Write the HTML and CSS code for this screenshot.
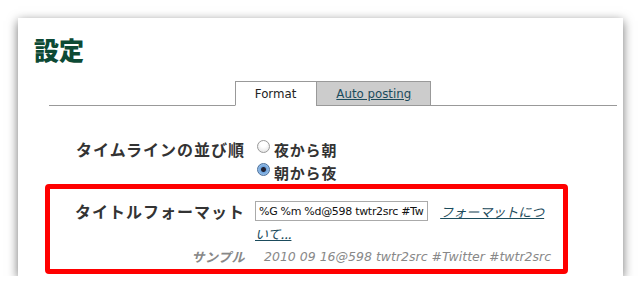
FILE: index.html
```html
<!DOCTYPE html>
<html lang="ja">
<head>
    <meta charset="UTF-8">
    <title>設定</title>
    <link rel="stylesheet" href="styles.css">
</head>
<body>
    <div class="card">
        <h1>設定</h1>

        <div class="tabs">
            <span class="tab active">Format</span>
            <span class="tab"><a href="#">Auto posting</a></span>
        </div>

        <div class="form">
            <div class="row plain">
                <div class="label">タイムラインの並び順</div>
                <div class="control radios">
                    <label><input type="radio" name="order"> 夜から朝</label>
                    <label><input type="radio" name="order" checked> 朝から夜</label>
                </div>
            </div>

            <div class="box">
                <div class="row">
                    <div class="label">タイトルフォーマット</div>
                    <div class="control format">
                        <input type="text" value="%G %m %d@598 twtr2src #Twitter">
                        <a href="#" class="help">フォーマットについて...</a>
                    </div>
                </div>
                <div class="row sample">
                    <div class="label">サンプル</div>
                    <div class="control">2010 09 16@598 twtr2src #Twitter #twtr2src</div>
                </div>
            </div>
        </div>
    </div>
</body>
</html>
```

FILE: styles.css
```css
body {
    margin: 0;
    padding: 18px 0 0 18px;
    background-color: #fff;
    font-family: "DejaVu Sans", "Noto Sans CJK JP", sans-serif;
    color: #333;
}

.card {
    width: 605px;
    height: 258px;
    background-color: #fff;
    box-shadow: 0 3px 10px rgba(0, 0, 0, 0.55);
    box-sizing: border-box;
    padding-top: 14px;
}

h1 {
    margin: 0 0 0 16px;
    font-family: "Noto Sans CJK JP", sans-serif;
    font-size: 25px;
    line-height: 34px;
    font-weight: 900;
    color: #0d4a35;
}

/* tab bar */
.tabs {
    display: flex;
    justify-content: center;
    margin: 15px 6px 0 31px;
    border-bottom: 1px solid #999;
}

.tab {
    display: block;
    height: 23px;
    line-height: 24px;
    padding: 0 19px;
    margin-bottom: -1px;
    border: 1px solid #999;
    background-color: #ccc;
    font-size: 11.8px;
    color: #222;
}

.tab.active {
    background-color: #fff;
    border-right: none;
    border-bottom: 1px solid #fff;
    padding-right: 20px;
}

.tab a {
    color: #1b4b5c;
}

/* form rows */
.form {
    margin: 32px 0 0 27px;
    width: 523px;
}

.row {
    display: flex;
}

.row.plain {
    padding-left: 5px;
}

.label {
    width: 195px;
    flex-shrink: 0;
    text-align: right;
    font-family: "Noto Sans CJK JP", sans-serif;
    font-weight: bold;
    font-size: 16px;
    letter-spacing: 1px;
    line-height: 23px;
    color: #333;
}

.control {
    margin-left: 10px;
}

.radios label {
    display: flex;
    align-items: center;
    height: 23px;
    font-family: "Noto Sans CJK JP", sans-serif;
    font-size: 15px;
    font-weight: bold;
    letter-spacing: 0.8px;
    color: #333;
}

.radios input {
    appearance: none;
    -webkit-appearance: none;
    width: 13px;
    height: 13px;
    margin: -6px 4px 0 2px;
    border: 1px solid #999;
    border-radius: 50%;
    background: radial-gradient(circle at 50% 30%, #fff 30%, #ddd 100%);
    box-sizing: border-box;
}

.radios input:checked {
    border-color: #4a6f9a;
    background: radial-gradient(circle, #223 0, #223 2px, #6ea3dc 3px, #bcd7f3 100%);
}

/* highlighted box */
.box {
    border: 5px solid #f00;
    border-radius: 4px;
    padding: 12px 0 0;
    height: 90px;
    box-sizing: border-box;
}

.box .label {
    line-height: 21px;
}

.format {
    width: 298px;
    line-height: 21px;
    font-size: 13px;
}

.format input {
    width: 173px;
    height: 20px;
    box-sizing: border-box;
    padding: 0 3px;
    margin: 0 8px 0 0;
    border: 1px solid #aaa;
    font-family: "DejaVu Sans", sans-serif;
    font-size: 11px;
    letter-spacing: -0.3px;
    color: #111;
    vertical-align: top;
}

.help {
    font-family: "Noto Sans CJK JP", sans-serif;
    font-style: italic;
    color: #1b4b5c;
}

.sample {
    margin-top: 2px;
}

.sample .label {
    font-size: 13px;
    font-style: italic;
    color: #888;
    line-height: 20px;
    letter-spacing: 0.5px;
}

.sample .control {
    margin-left: 19px;
    font-size: 12.5px;
    font-style: italic;
    color: #888;
    line-height: 20px;
}
```
